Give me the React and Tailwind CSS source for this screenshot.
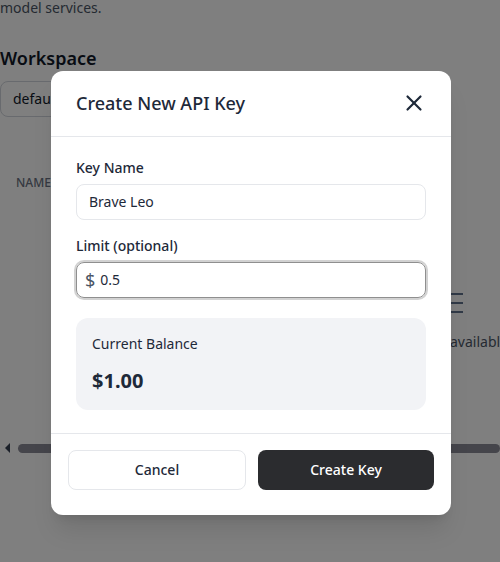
import React from "react";
import { X } from "lucide-react";

export default function App() {
  return (
    <div
      className="relative w-[500px] h-[562px] overflow-hidden bg-white text-gray-900"
      style={{ fontFamily: '"Noto Sans", "Open Sans", sans-serif' }}
    >
      {/* page behind the dialog */}
      <div className="flex flex-col">
        <p className="-mt-[2px] text-sm leading-5 text-gray-600">model services.</p>
        <h2 className="mt-[26px] text-lg font-semibold leading-7">Workspace</h2>
        <div className="mt-[9px] flex h-9 w-[200px] items-center rounded-lg border border-gray-300 px-3 text-sm">
          default
        </div>
        <div className="mt-[58px] flex items-center justify-between pl-4">
          <span className="text-xs font-medium uppercase text-gray-500">Name</span>
        </div>
        <div className="mt-[102px] flex justify-end pr-[37px]">
          <div className="flex w-3 flex-col gap-[7px]">
            <div className="h-[2px] bg-slate-500"></div>
            <div className="h-[2px] bg-slate-500"></div>
            <div className="h-[2px] bg-slate-500"></div>
          </div>
        </div>
        <div className="mt-[19px] flex justify-end">
          <span className="w-[50px] text-sm text-gray-600">available</span>
        </div>
        <div className="mt-[91px] flex items-center gap-[8px] pl-[5px]">
          <div className="h-0 w-0 border-y-[5px] border-r-[5px] border-y-transparent border-r-gray-700"></div>
          <div className="h-[9px] flex-1 rounded-full bg-[#8a8a96]"></div>
        </div>
      </div>

      {/* overlay */}
      <div className="absolute inset-0 flex items-start justify-center bg-black/50 pl-[2px] pt-[71px]">
        <div className="w-[400px] rounded-xl bg-white shadow-xl">
          <div className="flex items-center justify-between border-b border-gray-200 px-[25px] pb-[19px] pt-[18px]">
            <h3 className="text-lg font-medium leading-7 text-gray-800">Create New API Key</h3>
            <X size={26} strokeWidth={2} className="mr-[-1px] text-gray-800" />
          </div>

          <div className="flex flex-col px-[25px] pb-[23px] pt-[21px]">
            <label className="text-sm font-medium leading-5 text-gray-800">Key Name</label>
            <div className="mt-[6px] flex h-9 items-center rounded-lg border border-gray-200 px-3 text-sm text-gray-800">
              Brave Leo
            </div>

            <label className="mt-4 text-sm font-medium leading-5 text-gray-800">Limit (optional)</label>
            <div className="mt-[6px] flex h-9 items-center gap-[5px] rounded-lg border border-[#8f8f8f] px-2 text-sm text-gray-800 shadow-[0_0_0_2px_#d2d2d2]">
              <span className="text-lg leading-none text-gray-600">$</span>
              <span>0.5</span>
            </div>

            <div className="mt-5 flex flex-col rounded-xl bg-[#f2f3f6] px-4 pb-[15px] pt-4">
              <span className="text-sm leading-5 text-gray-800">Current Balance</span>
              <span className="mt-[13px] text-xl font-bold leading-7 text-gray-800">$1.00</span>
            </div>
          </div>

          <div className="flex gap-3 border-t border-gray-200 px-[17px] pb-[25px] pt-4">
            <button className="flex h-10 flex-1 items-center justify-center rounded-lg border border-gray-200 bg-white text-sm font-medium text-gray-800">
              Cancel
            </button>
            <button className="flex h-10 flex-1 items-center justify-center rounded-lg bg-[#2b2c2f] text-sm font-medium text-white">
              Create Key
            </button>
          </div>
        </div>
      </div>
    </div>
  );
}
